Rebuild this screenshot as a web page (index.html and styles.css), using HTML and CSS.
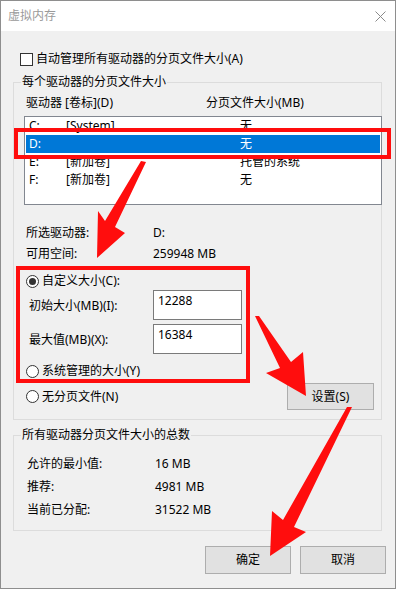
FILE: index.html
```html
<!DOCTYPE html>
<html lang="zh-CN">
<head>
    <meta charset="UTF-8">
    <meta name="viewport" content="width=device-width, initial-scale=1.0">
    <title>虚拟内存</title>
    <link rel="stylesheet" href="styles.css">
</head>
<body>
    <div class="screen">
        <div class="window">
            <header class="titlebar">
                <span class="title">虚拟内存</span>
                <svg class="close" viewBox="0 0 11 11">
                    <path d="M0.5 0.5 L10.5 10.5 M10.5 0.5 L0.5 10.5" stroke="#8a8a8a" stroke-width="1" fill="none"/>
                </svg>
            </header>

            <div class="check-row">
                <span class="checkbox"></span>
                <span>自动管理所有驱动器的分页文件大小(A)</span>
            </div>

            <fieldset class="group group-drives">
                <legend>每个驱动器的分页文件大小</legend>
                <div class="list-head">
                    <span class="col-drive">驱动器 [卷标](D)</span>
                    <span>分页文件大小(MB)</span>
                </div>
                <div class="listbox">
                    <div class="list-row"><span class="c-letter">C:</span><span class="c-label">[System]</span><span>无</span></div>
                    <div class="list-row selected"><span class="c-letter">D:</span><span class="c-label"></span><span>无</span></div>
                    <div class="list-row"><span class="c-letter">E:</span><span class="c-label">[新加卷]</span><span>托管的系统</span></div>
                    <div class="list-row"><span class="c-letter">F:</span><span class="c-label">[新加卷]</span><span>无</span></div>
                </div>

                <div class="info info-first"><span class="k">所选驱动器:</span><span>D:</span></div>
                <div class="info info-next"><span class="k">可用空间:</span><span>259948 MB</span></div>

                <div class="radio-row radio-custom"><span class="radio on"></span><span>自定义大小(C):</span></div>
                <div class="field-row field-first">
                    <span class="k">初始大小(MB)(I):</span>
                    <div class="field">12288</div>
                </div>
                <div class="field-row field-next">
                    <span class="k">最大值(MB)(X):</span>
                    <div class="field">16384</div>
                </div>
                <div class="radio-row radio-system"><span class="radio"></span><span>系统管理的大小(Y)</span></div>
                <div class="foot-row">
                    <div class="radio-item"><span class="radio"></span><span>无分页文件(N)</span></div>
                    <div class="btn btn-set">设置(S)</div>
                </div>
            </fieldset>

            <fieldset class="group group-total">
                <legend>所有驱动器分页文件大小的总数</legend>
                <div class="total-row total-first"><span class="k">允许的最小值:</span><span>16 MB</span></div>
                <div class="total-row"><span class="k">推荐:</span><span>4981 MB</span></div>
                <div class="total-row"><span class="k">当前已分配:</span><span>31522 MB</span></div>
            </fieldset>

            <div class="actions">
                <div class="btn">确定</div>
                <div class="btn">取消</div>
            </div>
        </div>

        <!-- 标注 -->
        <div class="mark mark-drive"></div>
        <div class="mark mark-size"></div>
        <svg class="arrows" viewBox="0 0 396 589">
            <path d="M141 161 L146 162 L115 227 L125 233 L97 258 L98 211 L105 221 Z"/>
            <path d="M255 316 L259 316 L291 362 L303 352 L306 396 L266 373 L280 368 Z"/>
            <path d="M347 407 L352 407 L294 527 L306 532 L270 556 L272 511 L283 520 Z"/>
        </svg>
    </div>
</body>
</html>
```

FILE: styles.css
```css
* {
    margin: 0;
    padding: 0;
    box-sizing: border-box;
}

body {
    font-family: "Noto Sans", "Noto Sans CJK SC", sans-serif;
    font-size: 12px;
    line-height: 16px;
    color: #000;
    background: #fff;
}

.screen {
    position: relative;
    width: 396px;
    height: 589px;
}

.window {
    width: 396px;
    height: 589px;
    border: 1px solid #8e8e8e;
    background: #f0f0f0;
}

.titlebar {
    height: 30px;
    background: #fff;
    display: flex;
    align-items: center;
    justify-content: space-between;
    padding: 0 9px 0 7px;
}

.title {
    color: #9a9a9a;
}

.close {
    width: 11px;
    height: 11px;
}

.check-row {
    display: flex;
    align-items: center;
    margin-top: 20px;
    padding-left: 19px;
}

.checkbox {
    width: 13px;
    height: 13px;
    border: 1px solid #333;
    background: #fff;
    margin-right: 3px;
}

/* 分组框 */
.group {
    width: 369px;
    min-width: 0;
    margin: 7px 0 0 12px;
    border: 1px solid #dcdcdc;
    padding: 0;
}

.group legend {
    margin-left: 7px;
    padding: 0 1px;
}

.group-drives { padding-bottom: 9px; }
.group-total { padding-bottom: 12px; }

.list-head {
    display: flex;
    margin-top: 5px;
    padding-left: 12px;
}

.col-drive { width: 180px; }

.listbox {
    width: 358px;
    height: 89px;
    margin: 5px 0 0 10px;
    border: 1px solid #828790;
    background: #fff;
}

.list-row {
    display: flex;
    align-items: center;
    height: 18px;
    margin: 0 1px;
    padding-left: 3px;
}

.list-row.selected {
    background: #0078d7;
    color: #fff;
}

.c-letter { width: 37px; }
.c-label { width: 174px; }

.info {
    display: flex;
    padding-left: 12px;
}

.info .k { width: 127px; }
.info-first { margin-top: 20px; }
.info-next { margin-top: 5px; }

.radio-row,
.radio-item {
    display: flex;
    align-items: center;
}

.radio-row { padding-left: 12px; }
.radio-custom { margin-top: 11px; }
.radio-system { margin-top: 9px; }

.radio {
    width: 13px;
    height: 13px;
    border: 1px solid #333;
    border-radius: 50%;
    background: #fff;
    margin-right: 3px;
    display: flex;
    align-items: center;
    justify-content: center;
}

.radio.on::after {
    content: "";
    width: 7px;
    height: 7px;
    border-radius: 50%;
    background: #333;
}

.field-row {
    display: flex;
    align-items: center;
    padding-left: 15px;
}

.field-row .k {
    width: 124px;
    padding-top: 2px;
}

.field-first { margin-top: 1px; }
.field-next { margin-top: 4px; }

.field {
    width: 89px;
    height: 30px;
    border: 1px solid #7a7a7a;
    background: #fff;
    padding: 2px 4px;
}

.foot-row {
    display: flex;
    align-items: center;
    margin-top: 4px;
    padding: 0 7px 0 12px;
}

.btn {
    display: flex;
    align-items: center;
    justify-content: center;
    width: 86px;
    height: 28px;
    border: 1px solid #adadad;
    background: #e1e1e1;
}

.btn-set {
    width: 87px;
    height: 27px;
    margin-left: auto;
}

.total-row {
    display: flex;
    padding-left: 13px;
    margin-top: 7px;
}

.total-row .k { width: 128px; }
.total-first { margin-top: 13px; }

.actions {
    display: flex;
    justify-content: flex-end;
    gap: 9px;
    margin-top: 15px;
    padding-right: 9px;
}

/* 红色标注 */
.mark {
    position: absolute;
    border: 4px solid #ff0d0d;
}

.mark-drive {
    left: 14px;
    top: 128px;
    width: 377px;
    height: 31px;
}

.mark-size {
    left: 16px;
    top: 266px;
    width: 234px;
    height: 117px;
}

.arrows {
    position: absolute;
    left: 0;
    top: 0;
    width: 396px;
    height: 589px;
    fill: #ff0d0d;
}
```
